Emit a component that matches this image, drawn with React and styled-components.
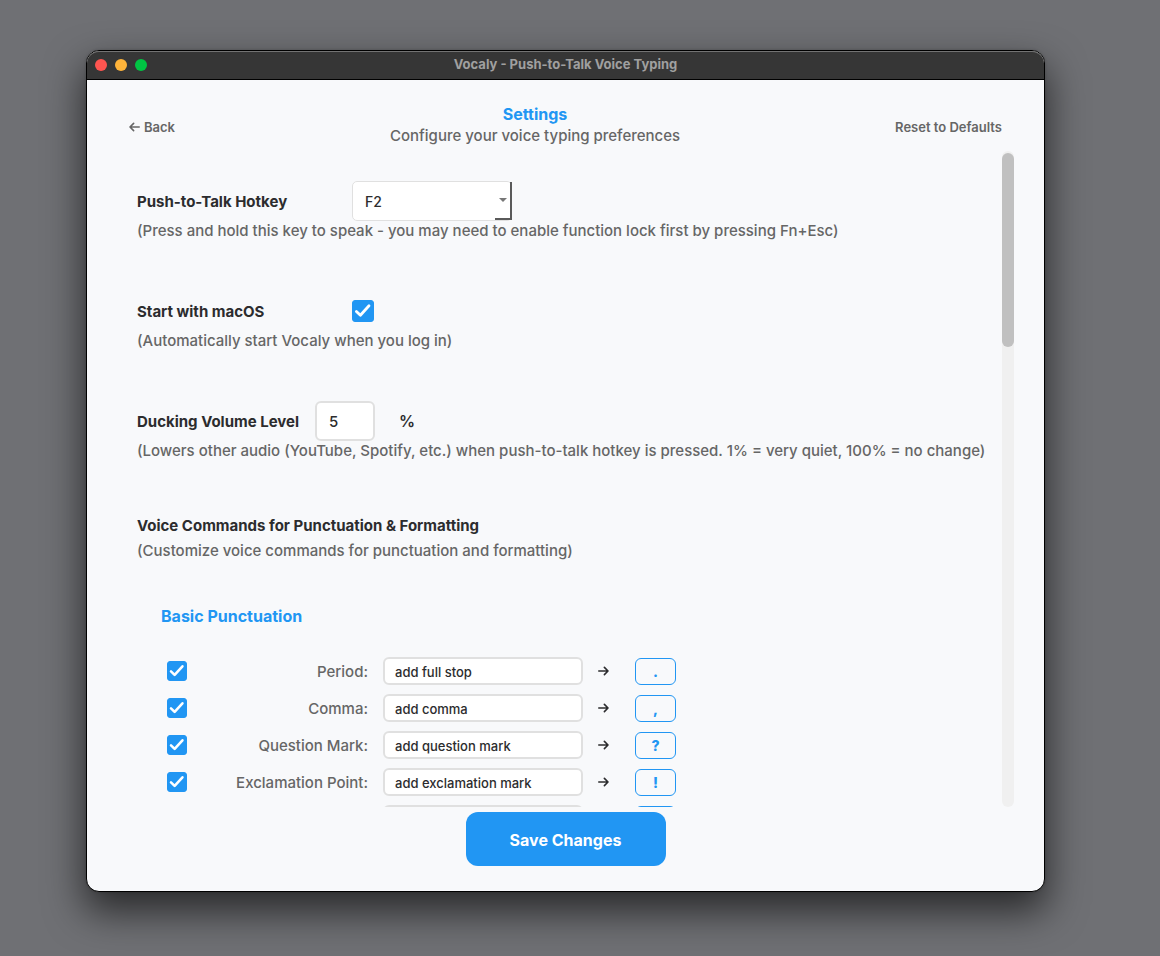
import React, { useState } from "react";
import styled, { createGlobalStyle } from "styled-components";

const GlobalStyle = createGlobalStyle`
  *, *::before, *::after { box-sizing: border-box; }
  body { margin: 0; background: #6f7074; font-family: Inter, "Liberation Sans", sans-serif; color: #2c2c2e; }
  button, input, select { font-family: inherit; color: inherit; margin: 0; }
  h1, h2, h3, p { margin: 0; }
`;

const Desktop = styled.div`
  display: flex;
  height: 100vh;
  min-height: 600px;
  padding: 50px 115px 64px 86px;
`;

const Window = styled.div`
  flex: 1;
  min-width: 0;
  display: flex;
  flex-direction: column;
  overflow: hidden;
  border: 1px solid #000;
  border-radius: 13px;
  background: #f8f9fb;
  box-shadow: 0 18px 38px 2px rgba(0, 0, 0, 0.62), 0 0 3px rgba(0, 0, 0, 0.2);
`;

const TitleBar = styled.header`
  display: grid;
  grid-template-columns: 1fr auto 1fr;
  align-items: center;
  height: 29px;
  flex: none;
  padding: 0 8px;
  background: #363636;
  border-bottom: 1px solid #000;
  border-radius: 12px 12px 0 0;
  box-shadow: inset 0 1px 0 #737373;
`;

const Lights = styled.div`
  display: flex;
  gap: 8px;
`;

const Light = styled.button`
  width: 12px;
  height: 12px;
  padding: 0;
  border: 0;
  border-radius: 50%;
  background: ${(p) => p.$color};
`;

const WindowTitle = styled.div`
  padding-bottom: 2px;
  font-size: 13px;
  line-height: 16px;
  font-weight: 700;
  color: #a0a0a0;
`;

const Header = styled.div`
  display: flex;
  justify-content: space-between;
  align-items: flex-end;
  flex: none;
  padding: 23px 42px 4px;
`;

const HeaderText = styled.div`
  text-align: center;
  line-height: 22px;
`;

const Title = styled.h1`
  font-size: 16px;
  line-height: 22px;
  font-weight: 700;
  color: #2196f3;
`;

const Subtitle = styled.p`
  font-size: 15px;
  font-weight: 450;
  color: #666;
`;

const LinkButton = styled.button`
  display: flex;
  align-items: center;
  gap: 4px;
  height: 40px;
  padding: 0;
  border: 0;
  background: none;
  font-size: 13px;
  font-weight: 600;
  color: #666;
`;

const Body = styled.main`
  flex: 1;
  min-height: 0;
  display: flex;
  padding-right: 30px;
`;

const Scroller = styled.div`
  flex: 1;
  min-width: 0;
  overflow-y: auto;
  scrollbar-width: none;
  padding: 30px 0 30px 50px;
`;

const Track = styled.div`
  flex: none;
  width: 12px;
  padding: 2px 0;
  border-radius: 6px;
  background: #f0f0f0;
`;

const Thumb = styled.div`
  height: calc(30% - 2px);
  border-radius: 6px;
  background: #c0c0c0;
`;

const Settings = styled.div`
  display: flex;
  flex-direction: column;
  gap: 50px;
`;

const SettingRow = styled.div`
  display: flex;
  align-items: center;
  height: 40px;
`;

const SettingLabel = styled.label`
  width: ${(p) => p.$width}px;
  font-size: 15px;
  font-weight: 700;
`;

const SectionTitle = styled.h2`
  font-size: 15px;
  line-height: 30px;
  font-weight: 700;
`;

const Hint = styled.p`
  font-size: 15px;
  line-height: 20px;
  font-weight: 450;
  white-space: nowrap;
  color: #666;
`;

const SelectBox = styled.div`
  display: grid;
  width: 160px;
  height: 40px;
  & > * { grid-area: 1 / 1; }
`;

const Select = styled.select`
  appearance: none;
  padding: 0 12px;
  border: 1px solid #e0e0e0;
  border-radius: 5px;
  background: #fff;
  font-size: 14px;
  font-weight: 500;
`;

const DropEdge = styled.span`
  justify-self: end;
  display: grid;
  place-items: center;
  width: 17px;
  margin: 1px 0;
  border-right: 2px solid #5a5a5a;
  border-bottom: 2px solid #5a5a5a;
  pointer-events: none;
`;

const NumberInput = styled.input`
  width: 60px;
  height: 40px;
  padding: 0 12px;
  border: 2px solid #e0e0e0;
  border-radius: 6px;
  background: #fff;
  font-size: 15px;
  font-weight: 500;
`;

const Unit = styled.span`
  margin-left: 24px;
  font-size: 16px;
  font-weight: 600;
`;

const CheckBox = styled.span`
  display: grid;
  width: ${(p) => p.$size}px;
  height: ${(p) => p.$size}px;
  & > * { grid-area: 1 / 1; width: 100%; height: 100%; }
  svg { pointer-events: none; }
  input {
    appearance: none;
    border-radius: 3px;
    border: 1px solid #2196f3;
    background: #fff;
  }
  input:checked { background: #2196f3; }
`;

const Commands = styled.section`
  padding: 40px 0 0 24px;
`;

const GroupTitle = styled.h3`
  font-size: 16px;
  line-height: 30px;
  font-weight: 700;
  color: #2196f3;
`;

const CommandList = styled.div`
  display: flex;
  flex-direction: column;
  gap: 9px;
  padding: 26px 0 0 6px;
`;

const CommandRow = styled.div`
  display: grid;
  grid-template-columns: 20px 166px 200px 11px 52px;
  column-gap: 15px;
  align-items: center;
  height: 28px;
`;

const CommandLabel = styled.label`
  padding-top: 2px;
  text-align: right;
  font-size: 15px;
  line-height: 20px;
  font-weight: 450;
  color: #666;
`;

const PhraseInput = styled.input`
  width: 200px;
  height: 28px;
  padding: 2px 10px 0;
  border: 2px solid #e0e0e0;
  border-radius: 6px;
  background: #fff;
  font-size: 13px;
  font-weight: 500;
`;

const Symbol = styled.span`
  justify-self: end;
  display: grid;
  place-items: center;
  width: 41px;
  height: 27px;
  border: 1px solid #2196f3;
  border-radius: 6px;
  font-size: 14px;
  font-weight: 800;
  color: #2196f3;
`;

const Footer = styled.footer`
  display: flex;
  justify-content: center;
  flex: none;
  padding: 5px 0 25px;
`;

const SaveButton = styled.button`
  width: 200px;
  height: 54px;
  padding: 2px 0 0;
  border: 0;
  border-radius: 12px;
  background: #2196f3;
  font-size: 16px;
  font-weight: 700;
  color: #fff;
`;

function Check({ id, size, label }) {
  return (
    <CheckBox $size={size}>
      <input type="checkbox" id={id} aria-label={label} defaultChecked />
      <svg viewBox="0 0 22 22" fill="none" stroke="#fff" strokeWidth="2.8" strokeLinecap="round" strokeLinejoin="round">
        <path d="M4.4 11.4 8.4 15.3 17 5.8" />
      </svg>
    </CheckBox>
  );
}

function Arrow({ back }) {
  return (
    <svg width="11" height="10" viewBox="0 0 11 10" fill="none" stroke="currentColor" strokeWidth="1.6" strokeLinecap="round" strokeLinejoin="round" aria-hidden="true">
      <path d={back ? "M10.2 5H1M4.6 1.4 1 5l3.6 3.6" : "M.8 5H10M6.4 1.4 10 5 6.4 8.6"} />
    </svg>
  );
}

const commands = [
  ["Period", "add full stop", "."],
  ["Comma", "add comma", ","],
  ["Question Mark", "add question mark", "?"],
  ["Exclamation Point", "add exclamation mark", "!"],
  ["Colon", "add colon", ":"],
];

export default function App() {
  const [offset, setOffset] = useState(0);
  const onScroll = (e) => {
    const el = e.currentTarget;
    const range = el.scrollHeight - el.clientHeight;
    setOffset(range > 0 ? (el.scrollTop / range) * (el.clientHeight * 0.7 - 4) : 0);
  };
  return (
    <>
      <GlobalStyle />
      <Desktop>
        <Window>
          <TitleBar>
            <Lights>
              <Light $color="#ff5550" aria-label="Close" />
              <Light $color="#ffb43a" aria-label="Minimize" />
              <Light $color="#00c543" aria-label="Zoom" />
            </Lights>
            <WindowTitle>Vocaly - Push-to-Talk Voice Typing</WindowTitle>
          </TitleBar>
          <Header>
            <LinkButton><Arrow back />Back</LinkButton>
            <HeaderText>
              <Title>Settings</Title>
              <Subtitle>Configure your voice typing preferences</Subtitle>
            </HeaderText>
            <LinkButton>Reset to Defaults</LinkButton>
          </Header>
          <Body>
            <Scroller onScroll={onScroll}>
              <Settings>
                <div>
                  <SettingRow>
                    <SettingLabel $width={215} htmlFor="hotkey">Push-to-Talk Hotkey</SettingLabel>
                    <SelectBox>
                      <Select id="hotkey" defaultValue="F2"><option>F2</option></Select>
                      <DropEdge>
                        <svg width="8" height="4" viewBox="0 0 8 4"><path d="M0 0h8L4 4z" fill="#777" /></svg>
                      </DropEdge>
                    </SelectBox>
                  </SettingRow>
                  <Hint>(Press and hold this key to speak - you may need to enable function lock first by pressing Fn+Esc)</Hint>
                </div>
                <div>
                  <SettingRow>
                    <SettingLabel $width={215} htmlFor="autostart">Start with macOS</SettingLabel>
                    <Check id="autostart" size={22} />
                  </SettingRow>
                  <Hint>(Automatically start Vocaly when you log in)</Hint>
                </div>
                <div>
                  <SettingRow>
                    <SettingLabel $width={178} htmlFor="ducking">Ducking Volume Level</SettingLabel>
                    <NumberInput id="ducking" defaultValue="5" inputMode="numeric" />
                    <Unit>%</Unit>
                  </SettingRow>
                  <Hint>(Lowers other audio (YouTube, Spotify, etc.) when push-to-talk hotkey is pressed. 1% = very quiet, 100% = no change)</Hint>
                </div>
                <div>
                  <SectionTitle>Voice Commands for Punctuation &amp; Formatting</SectionTitle>
                  <Hint>(Customize voice commands for punctuation and formatting)</Hint>
                  <Commands>
                    <GroupTitle>Basic Punctuation</GroupTitle>
                    <CommandList>
                      {commands.map(([name, phrase, symbol]) => (
                        <CommandRow key={name}>
                          <Check size={20} label={`Enable ${name}`} />
                          <CommandLabel htmlFor={`phrase-${name}`}>{name}:</CommandLabel>
                          <PhraseInput id={`phrase-${name}`} defaultValue={phrase} />
                          <Arrow />
                          <Symbol>{symbol}</Symbol>
                        </CommandRow>
                      ))}
                    </CommandList>
                  </Commands>
                </div>
              </Settings>
            </Scroller>
            <Track><Thumb style={{ transform: `translateY(${offset}px)` }} /></Track>
          </Body>
          <Footer><SaveButton>Save Changes</SaveButton></Footer>
        </Window>
      </Desktop>
    </>
  );
}
